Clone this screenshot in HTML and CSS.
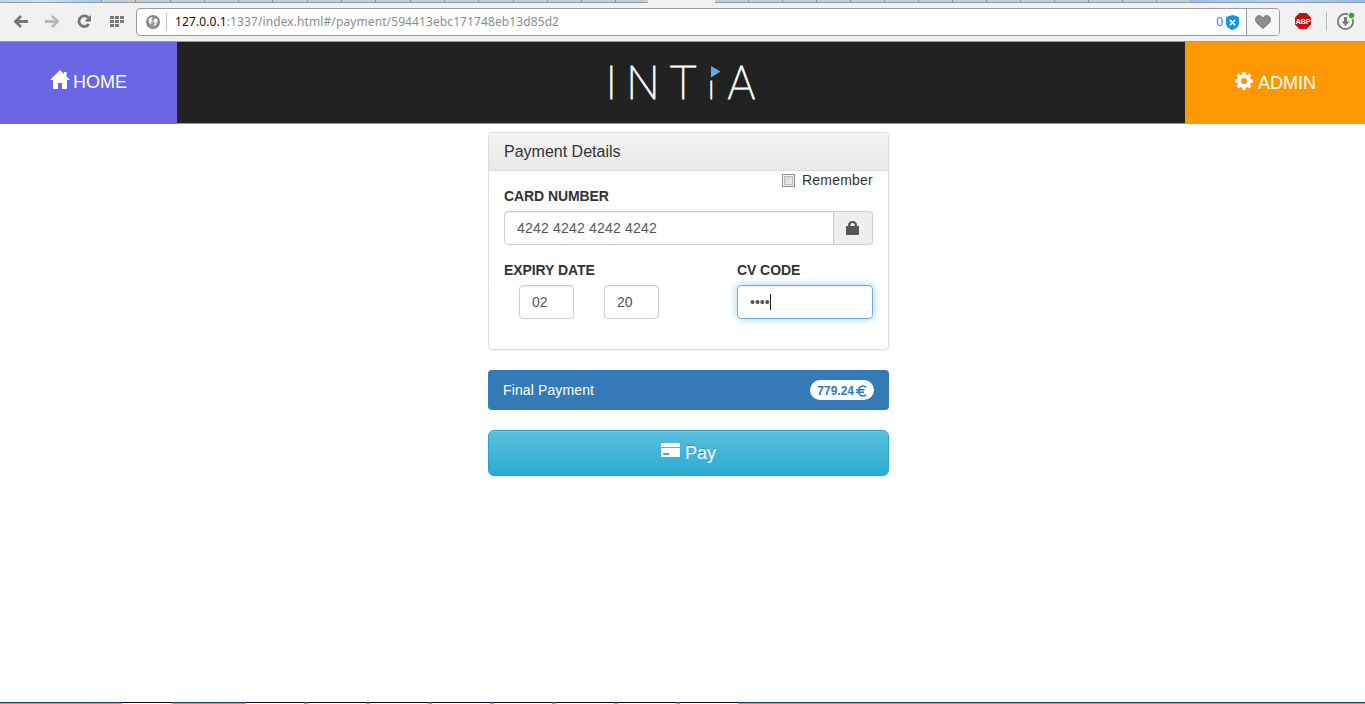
FILE: index.html
```html
<!DOCTYPE html>
<html lang="en">
<head>
<meta charset="utf-8">
<title>Payment</title>
<link rel="stylesheet" href="styles.css">
</head>
<body>
<div class="tabs"><div class="tabs-start"></div><div class="tabs-left"></div><div class="tab-active"></div><div class="tabs-right"></div><div class="tabs-end"></div></div>
<div class="toolbar">
  <svg class="tools" width="136" height="38" viewBox="0 3 136 38">
    <path d="M28 21.500H16M21 16l-5.500 5.500 5.500 5.500" fill="none" stroke="#737678" stroke-width="2.800"/>
    <path d="M45 21.500H57M52 16l5.500 5.500-5.500 5.500" fill="none" stroke="#b7b8b9" stroke-width="2.800"/>
    <path d="M88.300 17.800A5.300 5.300 0 1 0 88.800 24" fill="none" stroke="#737678" stroke-width="2.800"/>
    <path d="M91 15v6.500h-6.500z" fill="#737678"/>
    <path d="M110 16h4v3h-4zm5 0h4v3h-4zm5 0h4v3h-4zm-10 4h4v3h-4zm5 0h4v3h-4zm5 0h4v3h-4zm-10 4h4v3h-4zm5 0h4v3h-4z" fill="#77797b"/>
  </svg>
  <div class="address">
    <svg class="globe" width="14" height="14" viewBox="0 0 14 14"><circle cx="7" cy="7" r="6" fill="#999" stroke="#858585" stroke-width="2"/><path d="M2.500 4l2.500-2 1.500 1-1 2 1.500 1.500-2 .5.500 2.500L3 8zM8 4l3-.5.8 3-1.300 1-.5 2.500-1.500 1.500L8 9.500 9 8 7.500 6.500z" fill="#f0f0f0"/></svg>
    <div class="url"><b>127.0.0.1</b>:1337/index.html#/payment/594413ebc171748eb13d85d2</div>
    <span class="count">0</span>
    <svg class="shield" width="13" height="15" viewBox="0 0 12 14"><path d="M6 0l6 1.800V8c0 3-3 5-6 6-3-1-6-3-6-6V1.800z" fill="#0c92f8"/><path d="M3.500 4.500l5 5m0-5l-5 5" stroke="#fff" stroke-width="1.600"/></svg>
    <div class="heart"><svg width="16" height="14" viewBox="0 0 16 14"><path d="M8 13.500L1.500 7.500C-.5 5.200.3 1 4 .7 6 .6 7.300 1.600 8 3 8.700 1.600 10 .6 12 .7c3.700.3 4.500 4.500 2.500 6.800z" fill="#8c8c8c" stroke="#737373"/></svg></div>
  </div>
  <svg class="extensions" width="85" height="38" viewBox="1280 3 85 38">
    <path d="M1299.500 13h7l4.500 4.500v7l-4.500 4.500h-7l-4.500-4.500v-7z" fill="#c70d0d"/>
    <text class="abp" x="1303" y="23.700" text-anchor="middle">ABP</text>
    <path d="M1326.500 12v19" stroke="#b9babc"/>
    <circle cx="1345.500" cy="21.500" r="7.600" fill="#f1f1f1" stroke="#77797c" stroke-width="1.800"/>
    <path d="M1344 17h3v4.500h2.500l-4 4.500-4-4.500h2.500z" fill="#77797c"/>
    <circle cx="1351.500" cy="15.500" r="3.300" fill="#18be18" stroke="#f1f1f1"/>
  </svg>
</div>
<nav class="nav">
  <a class="home"><svg width="20" height="20" viewBox="0 0 20 20"><path d="M10 0L0 10h3v9h5v-6h4v6h5v-9h3l-3.500-3.500V2H14v2z" fill="#fff"/></svg><span>HOME</span></a>
  <div class="brand"><svg width="170" height="72" viewBox="597 47 170 72"><text class="brand-text" y="98.800"><tspan x="605.300">I</tspan><tspan x="626.500">N</tspan><tspan x="669.300">T</tspan><tspan class="brand-i" x="707.800">ı</tspan><tspan x="727.500">A</tspan></text><path d="M711 66l9.500 5.500-9.500 6z" fill="#5faee3"/></svg></div>
  <a class="admin"><svg width="18" height="18" viewBox="-9 -9 18 18"><g fill="#fff"><path d="M-2-5L-1.500-9h3L2-5zM-2 5L-1.500 9h3L2 5zM-5-2L-9-1.500v3L-5 2zM5-2l4 .5v3L5 2z"/><g transform="rotate(45)"><path d="M-2-5L-1.500-9h3L2-5zM-2 5L-1.500 9h3L2 5zM-5-2L-9-1.500v3L-5 2zM5-2l4 .5v3L5 2z"/></g></g><circle r="5" fill="none" stroke="#fff" stroke-width="3.800"/></svg><span>ADMIN</span></a>
</nav>
<main class="checkout">
  <section class="panel">
    <h3 class="panel-title">Payment Details</h3>
    <div class="panel-body">
      <div class="remember"><i class="check"></i><span>Remember</span></div>
      <div class="label">CARD NUMBER</div>
      <div class="card-row"><div class="field">4242 4242 4242 4242</div><div class="addon"><svg width="13" height="14" viewBox="0 0 13 14"><path d="M2 5V4.500C2 1.500 3.500 0 6.500 0S11 1.500 11 4.500V5h1c.6 0 1 .4 1 1v7c0 .6-.4 1-1 1H1c-.6 0-1-.4-1-1V6c0-.6.4-1 1-1zm2.300 0h4.400V4.500c0-1.500-.7-2.400-2.200-2.400s-2.200.9-2.200 2.400z" fill="#555"/></svg></div></div>
      <div class="details">
        <div><div class="label">EXPIRY DATE</div><div class="expiry"><div class="field">02</div><div class="field">20</div></div></div>
        <div class="cv"><div class="label">CV CODE</div><div class="field focus">••••<i class="caret"></i></div></div>
      </div>
    </div>
  </section>
  <div class="final"><span class="final-label">Final Payment</span><span class="badge">779.24<svg width="11" height="12" viewBox="0 0 11 12"><path d="M10 2.500C9.200 1.300 8.200.9 7 .9 4.300.9 2.800 3 2.800 6s1.500 5.100 4.200 5.100c1.200 0 2.200-.5 3-1.600M0 4.700h8.500M0 7.200h8" fill="none" stroke="#337ab7" stroke-width="1.500"/></svg></span></div>
  <div class="pay"><svg width="19" height="14" viewBox="0 0 19 14"><path d="M1 0h17c.6 0 1 .4 1 1v3H0V1c0-.6.4-1 1-1zM0 5h19v8c0 .6-.4 1-1 1H1c-.6 0-1-.4-1-1z" fill="#fff"/><path d="M2 10h6v2H2z" fill="#38aed3"/></svg><span>Pay</span></div>
</main>
<footer class="taskbar"><i></i><i></i><i></i><i></i><i></i><i></i><i></i><i></i><i></i></footer>
</body>
</html>
```
FILE: styles.css
```css
* { box-sizing: border-box; }
body { margin: 0; height: 704px; overflow: hidden; display: flex; flex-direction: column; background: #fff; color: #333; font: 14px/20px "Liberation Sans", Arial, sans-serif; }
svg { display: block; flex: none; }
.tabs { display: flex; height: 3px; flex: none; border-bottom: 1px solid #929ca4; background: #f1f1f1; }
.tabs-start { width: 101px; background: linear-gradient(90deg, #bfd3e6, #c9e1f7 40%, #a2c8ed); }
.tabs-left { width: 547px; background: repeating-linear-gradient(90deg, #8c9397 0 1px, #c7cdd0 1px 34.300px); border-radius: 0 0 3px 0; }
.tab-active { width: 67px; height: 3px; background: #f1f1f1; }
.tabs-right { width: 475px; background: repeating-linear-gradient(90deg, #c7cdd0 0 33px, #8c9397 33px 34px); }
.tabs-end { flex: 1; background: linear-gradient(90deg, #98bfed, #b6d4ef 50%, #91bce7); }
.toolbar { height: 39px; flex: none; display: flex; background: #f1f1f1; border-bottom: 1px solid #9a9a9a; }
.address { width: 1144px; height: 28px; margin-top: 5px; display: flex; align-items: center; background: #fff; border: 1px solid #999c9f; border-radius: 4px; overflow: hidden; color: #8c8c8c; font: 12px/18px "Noto Sans", sans-serif; }
.globe { margin-left: 9px; }
.url { flex: 1; margin-left: 6px; padding-left: 8px; border-left: 1px solid #c4c4c4; letter-spacing: .1px; white-space: nowrap; }
.url b { color: #111; font-weight: 400; }
.count { color: #2c83e8; margin-right: 3px; }
.shield { margin-right: 7px; }
.heart { width: 33px; height: 28px; display: flex; align-items: center; justify-content: center; background: #f6f6f6; border-left: 1px solid #999c9f; }
.abp { fill: #fff; font: bold 7.500px "Liberation Sans", sans-serif; letter-spacing: -.2px; }
.nav { height: 82px; flex: none; display: flex; background: #222; color: #fff; font-size: 18px; }
.home, .admin { display: flex; justify-content: center; }
.home { width: 177px; background: #6a66e5; padding-top: 28px; gap: 3px; }
.home span { padding-top: 2px; }
.brand { flex: 1; display: flex; padding: 5px 0 0 420px; border-bottom: 1px solid #999; }
.brand-text { fill: #fff; font: 100 46.500px Roboto, sans-serif; stroke: #fff; stroke-width: .8px; }
.brand-i { font-size: 34px; }
.admin { width: 180px; background: #ff9800; padding: 30px 0 0 1px; gap: 5px; }
.admin span { padding-top: 1px; }
.checkout { width: 401px; margin: 8px 0 0 488px; flex: 1; }
.panel { border: 1px solid #ddd; border-radius: 4px; box-shadow: 0 1px 2px rgba(0,0,0,.05); height: 218px; }
.panel-title { margin: 0; height: 38px; padding: 9px 15px; font-size: 16px; font-weight: 400; background: linear-gradient(#f5f5f5, #e8e8e8); border-bottom: 1px solid #ddd; border-radius: 3px 3px 0 0; }
.panel-body { padding: 0 15px 30px; }
.remember { height: 15px; display: flex; justify-content: flex-end; gap: 7px; line-height: 18px; }
.remember span { letter-spacing: .22px; }
.check { width: 13px; height: 13px; margin-top: 3px; border: 1px solid #8e8f8f; background: linear-gradient(135deg, #c8ccd2, #f4f4f4); box-shadow: inset 0 0 0 1px #f4f4f4, inset 0 0 0 2px #b9bdc3; }
.label { font-weight: 700; margin-bottom: 5px; letter-spacing: -.08px; }
.field { height: 34px; border: 1px solid #ccc; border-radius: 4px; padding: 6px 12px; color: #555; box-shadow: inset 0 1px 1px rgba(0,0,0,.075); }
.card-row { display: flex; }
.card-row .field { flex: 1; border-radius: 4px 0 0 4px; letter-spacing: .2px; }
.addon { width: 39px; display: flex; align-items: center; justify-content: center; padding-right: 1px; background: #eee; border: 1px solid #ccc; border-left: 0; border-radius: 0 4px 4px 0; }
.details { display: flex; justify-content: space-between; margin-top: 15px; }
.expiry { display: flex; gap: 30px; padding-left: 15px; }
.expiry .field { width: 55px; }
.cv { width: 136px; }
.focus { display: flex; align-items: center; border-color: #66afe9; box-shadow: inset 0 1px 1px rgba(0,0,0,.075), 0 0 8px rgba(102,175,233,.6); }
.caret { width: 1px; height: 16px; background: #222; }
.final { height: 40px; margin: 20px 0; padding: 0 15px; display: flex; align-items: center; justify-content: space-between; color: #fff; background: #337ab7; border-radius: 4px; }
.final-label { letter-spacing: .12px; }
.badge { display: flex; align-items: center; gap: 2px; height: 20px; padding: 1px 7px 0; border-radius: 10px; background: #fff; color: #337ab7; font-size: 12px; font-weight: 700; }
.pay { height: 46px; display: flex; justify-content: center; gap: 5px; padding-top: 12px; border: 1px solid #28a4c9; border-radius: 6px; background: linear-gradient(#5bc0de, #2aabd2); color: #fff; font-size: 18px; text-shadow: 0 -1px 0 rgba(0,0,0,.2); box-shadow: inset 0 1px 0 rgba(255,255,255,.15), 0 1px 1px rgba(0,0,0,.075); }
.pay span { line-height: 21px; }
.taskbar { height: 2px; flex: none; display: flex; gap: 4px; padding-left: 122px; background: linear-gradient(#24435f 50%, #7faecb 50%); }
.taskbar i { width: 58px; background: linear-gradient(#050a10 50%, #fff 50%); }
.taskbar i:first-child { width: 50px; }
.taskbar i:nth-child(2) { margin-left: 70px; }
```
